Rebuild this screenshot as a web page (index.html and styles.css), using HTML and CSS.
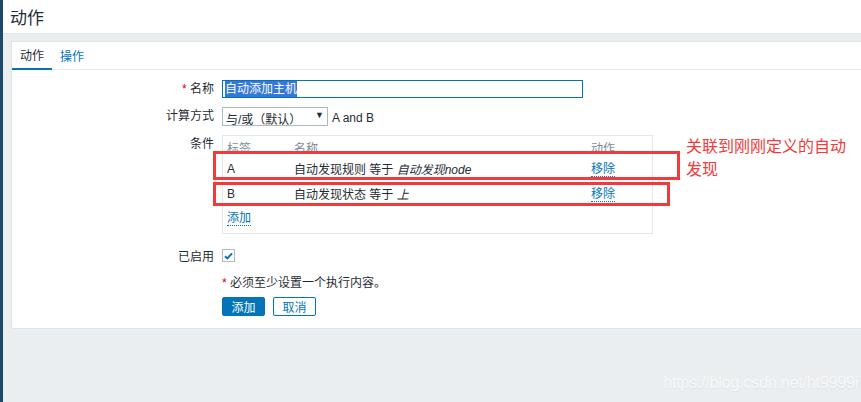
FILE: index.html
```html
<!DOCTYPE html>
<html lang="zh-CN">
<head>
    <meta charset="UTF-8">
    <title>动作</title>
    <link rel="stylesheet" href="styles.css">
</head>
<body>
    <div class="page">
        <div class="sidebar"></div>
        <main class="main">
            <header class="header">
                <h1 class="title">动作</h1>
            </header>

            <section class="panel">
                <!-- Tabs -->
                <nav class="tabs">
                    <span class="tab active">动作</span>
                    <span class="tab">操作</span>
                </nav>

                <!-- Form -->
                <div class="form">
                    <label class="label"><span class="req">*</span> 名称</label>
                    <div class="field">
                        <div class="input"><span class="selected">自动添加主机</span></div>
                    </div>

                    <label class="label">计算方式</label>
                    <div class="field row">
                        <div class="select">
                            <span class="select-text">与/或（默认）</span>
                            <span class="caret">&#9660;</span>
                        </div>
                        <span class="expr">A and B</span>
                    </div>

                    <label class="label">条件</label>
                    <div class="field">
                        <div class="conditions">
                            <div class="cond-row cond-head">
                                <span class="c-tag">标签</span>
                                <span class="c-name">名称</span>
                                <span class="c-act">动作</span>
                            </div>
                            <div class="cond-row">
                                <span class="c-tag">A</span>
                                <span class="c-name">自动发现规则 等于 <em>自动发现node</em></span>
                                <span class="c-act"><a class="link">移除</a></span>
                            </div>
                            <div class="cond-row">
                                <span class="c-tag">B</span>
                                <span class="c-name">自动发现状态 等于 <em>上</em></span>
                                <span class="c-act"><a class="link">移除</a></span>
                            </div>
                            <div class="cond-row cond-add">
                                <a class="link">添加</a>
                            </div>

                            <!-- annotation overlay -->
                            <div class="mark mark-a"></div>
                            <div class="mark mark-b"></div>
                            <div class="note-red">关联到刚刚定义的自动<br>发现</div>
                        </div>
                    </div>

                    <label class="label label-check">已启用</label>
                    <div class="field field-check">
                        <span class="checkbox">
                            <svg width="9" height="8" viewBox="0 0 9 8"><path d="M1 4.2 L3.4 6.4 L8 1.4" fill="none" stroke="#0275b8" stroke-width="2"/></svg>
                        </span>
                    </div>

                    <div></div>
                    <div class="field hint"><span class="req">*</span> 必须至少设置一个执行内容。</div>

                    <div></div>
                    <div class="field buttons">
                        <button class="btn btn-primary">添加</button>
                        <button class="btn btn-alt">取消</button>
                    </div>
                </div>
            </section>

            <div class="watermark">https://blog.csdn.net/ht9999i</div>
        </main>
    </div>
</body>
</html>
```

FILE: styles.css
```css
body, html {
    margin: 0;
    height: 100%;
    background-color: #ebeef0;
    font-family: "Liberation Sans", "Noto Sans CJK SC", sans-serif;
    font-size: 12px;
    color: #1f2c33;
    overflow: hidden;
}

.page {
    display: flex;
    height: 100%;
}

.sidebar {
    width: 3px;
    background-color: #1d4a6b;
}

.main {
    flex: 1;
    position: relative;
    display: flex;
    flex-direction: column;
}

.header {
    height: 33px;
    background-color: #ffffff;
    border-bottom: 1px solid #dfe4e7;
    padding-left: 7px;
    display: flex;
    align-items: center;
}

.title {
    margin: 0;
    font-size: 17px;
    font-weight: normal;
    color: #1f2c33;
}

.panel {
    margin: 7px 0 0 8px;
    background-color: #ffffff;
    border: 1px solid #dfe4e7;
    border-right: none;
    height: 286px;
}

/* Tabs */
.tabs {
    display: flex;
    height: 27px;
    border-bottom: 1px solid #ebeef0;
}

.tab {
    padding: 0 8px;
    width: 24px;
    display: flex;
    align-items: center;
    justify-content: center;
    color: #0275b8;
    margin-bottom: 1px;
}

.tab.active {
    color: #1f2c33;
    border-bottom: 2px solid #0275b8;
    margin-bottom: -1px;
    padding-bottom: 1px;
}

/* Form grid */
.form {
    display: grid;
    grid-template-columns: 202px 1fr;
    column-gap: 8px;
    margin-top: 10px;
}

.label {
    text-align: right;
    line-height: 18px;
    height: 18px;
}

.req {
    color: #d40000;
}

.field {
    margin-bottom: 9px;
}

.input {
    width: 355px;
    height: 16px;
    border: 1px solid #0275b8;
    padding: 0 2px;
    line-height: 16px;
}

.selected {
    background-color: #3479d8;
    color: #ffffff;
    padding: 1px 0;
}

.row {
    display: flex;
    align-items: center;
}

.select {
    height: 17px;
    border: 1px solid #acbbc2;
    display: flex;
    align-items: center;
    justify-content: space-between;
    padding: 0 3px;
    width: 98px;
    margin-right: 4px;
    overflow: hidden;
}

.select-text {
    margin-top: 4px;
}

.caret {
    font-size: 9px;
    margin-top: -4px;
}

.expr {
    margin-top: 2px;
}

/* Conditions table */
.conditions {
    position: relative;
    width: 421px;
    height: 91px;
    border: 1px solid #e3e7ea;
    padding: 2px 4px 4px 4px;
}

.cond-row {
    display: flex;
    height: 25px;
    align-items: center;
}

.cond-head {
    color: #768d99;
    height: 18px;
}

.c-tag {
    width: 67px;
}

.c-name {
    width: 297px;
}

.link {
    color: #0275b8;
    border-bottom: 1px dotted #0275b8;
    line-height: 14px;
}

.mark {
    position: absolute;
    border: 3px solid #f23a3a;
}

.mark-a {
    left: -10px;
    top: 15px;
    width: 461px;
    height: 23px;
}

.mark-b {
    left: -10px;
    top: 46px;
    width: 451px;
    height: 18px;
}

.note-red {
    position: absolute;
    left: 463px;
    top: -1px;
    color: #f23a3a;
    font-size: 16px;
    line-height: 23px;
    white-space: nowrap;
}

.field-check {
    margin-top: 6px;
    margin-bottom: 8px;
}

.label-check {
    margin-top: 5px;
}

.checkbox {
    display: flex;
    align-items: center;
    justify-content: center;
    width: 11px;
    height: 11px;
    border: 1px solid #acbbc2;
}

.hint {
    margin-top: 3px;
    margin-bottom: 7px;
}

.buttons {
    display: flex;
    gap: 8px;
}

.btn {
    font-family: inherit;
    font-size: 12px;
    height: 19px;
    width: 43px;
    padding: 0;
    border: 1px solid #0275b8;
    border-radius: 2px;
    cursor: pointer;
}

.btn-primary {
    background-color: #0275b8;
    color: #ffffff;
}

.btn-alt {
    background-color: #ffffff;
    color: #0275b8;
}

.watermark {
    position: absolute;
    right: 3px;
    bottom: 10px;
    color: #f7f8f9;
    font-size: 16.5px;
    letter-spacing: -0.4px;
    text-shadow: 0 1px 1px #dde1e4;
}
```
